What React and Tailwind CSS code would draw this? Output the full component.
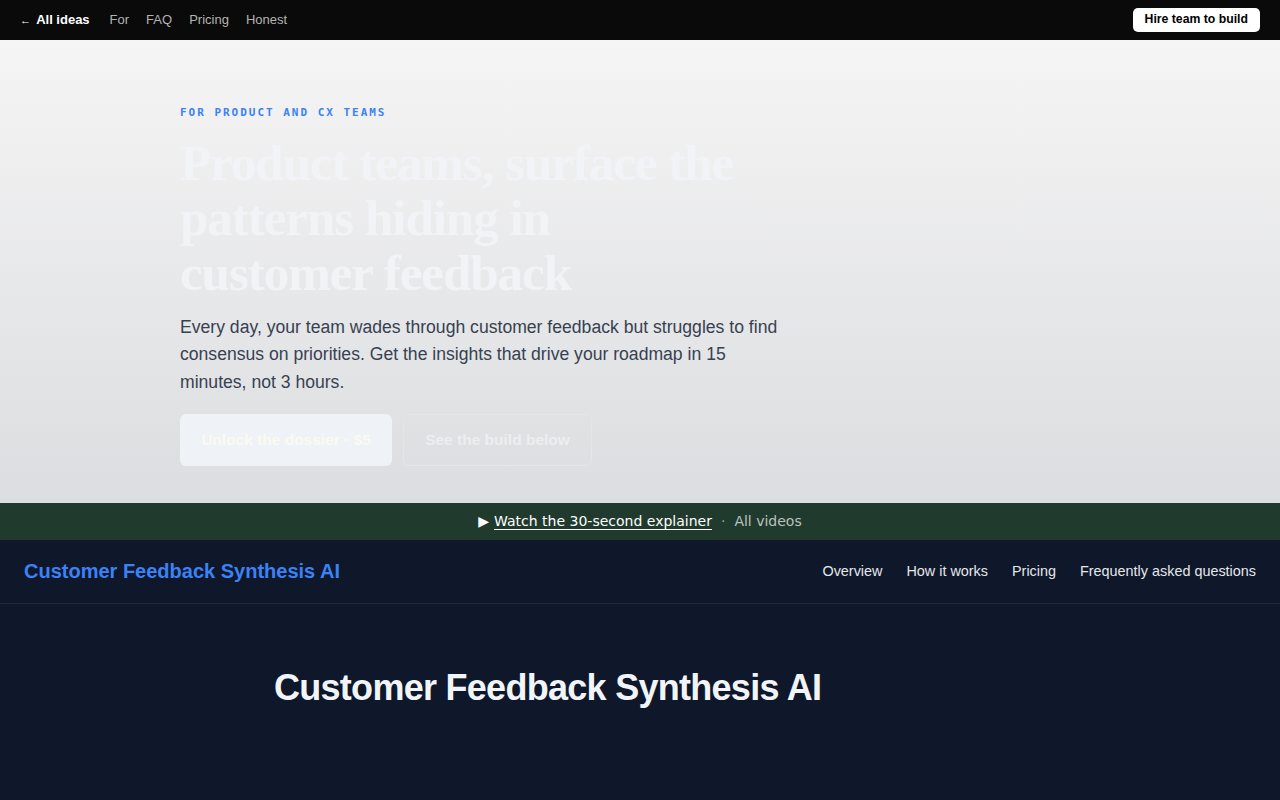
export default function App() {
  return (
    <div className="min-h-screen bg-[#0f172a] font-['Liberation_Sans',Arial,sans-serif]">
      {/* top bar */}
      <div className="h-10 bg-[#0a0a0a] flex items-center justify-between px-5">
        <div className="flex items-center gap-[17px] text-[13px]">
          <a className="text-white font-bold">
            <span className="text-[11px] mr-[2px]">←</span> All ideas
          </a>
          <a className="text-[#b3b3b3] ml-[3px]">For</a>
          <a className="text-[#b3b3b3]">FAQ</a>
          <a className="text-[#b3b3b3]">Pricing</a>
          <a className="text-[#b3b3b3]">Honest</a>
        </div>
        <button className="bg-white text-black font-bold text-[12.25px] rounded-[5px] h-6 px-3 -mt-px">
          Hire team to build
        </button>
      </div>

      {/* hero */}
      <section className="bg-gradient-to-b from-[#f5f5f5] to-[#dcdde0] h-[463px] px-[180px] pt-[65px]">
        <p className="font-['DejaVu_Sans_Mono',monospace] font-bold text-[11px] tracking-[0.18em] text-[#3b82f6]">
          FOR PRODUCT AND CX TEAMS
        </p>
        <h1 className="mt-[14px] font-['Liberation_Serif','Times_New_Roman',serif] font-bold text-[51px] leading-[55px] tracking-[-0.02em] text-[#f1f3f7] max-w-[565px]">
          Product teams, surface the patterns hiding in customer feedback
        </h1>
        <p className="mt-[13px] text-[17.6px] leading-[27.5px] text-[#374151] max-w-[610px]">
          Every day, your team wades through customer feedback but struggles to find consensus on priorities. Get the insights that drive your roadmap in 15 minutes, not 3 hours.
        </p>
        <div className="mt-[18px] flex gap-[11px]">
          <button className="h-[52px] w-[212px] rounded-md bg-[#eff2f7] text-[#fbfaf0] font-bold text-[15.5px]">
            Unlock the dossier · $5
          </button>
          <button className="h-[52px] w-[189px] rounded-md border border-[#e5e6e9] text-[#eceef2] font-bold text-[15.5px]">
            See the build below
          </button>
        </div>
      </section>

      {/* video strip */}
      <div className="h-[37px] bg-[#213a2e] flex items-center justify-center font-['DejaVu_Sans',sans-serif] text-[14px]">
        <span className="text-white mr-[5px]">▶</span>
        <a className="text-white underline underline-offset-[3px]">Watch the 30-second explainer</a>
        <span className="text-[#9aa59f] mx-[9px]">·</span>
        <a className="text-[#b8c2bc]">All videos</a>
      </div>

      {/* app header */}
      <header className="h-16 border-b border-[#1f2937] flex items-center justify-between px-6">
        <div className="text-[#3b82f6] font-bold text-[20px] -mt-[2px]">Customer Feedback Synthesis AI</div>
        <nav className="flex gap-6 text-[14.4px] text-[#e5e7eb]">
          <a>Overview</a>
          <a>How it works</a>
          <a>Pricing</a>
          <a>Frequently asked questions</a>
        </nav>
      </header>

      <main className="max-w-3xl mx-auto px-[18px] pt-[57px]">
        <h2 className="text-[#f1f5f9] font-bold text-[36px] tracking-[-0.02em]">
          Customer Feedback Synthesis AI
        </h2>
      </main>
    </div>
  );
}
